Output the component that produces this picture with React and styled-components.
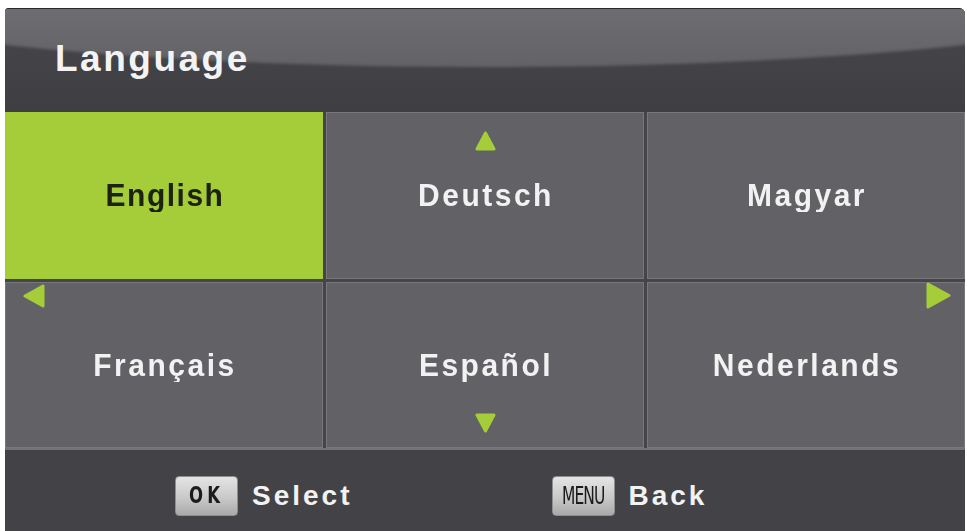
import React from "react";
import styled, { createGlobalStyle } from "styled-components";

const Global = createGlobalStyle`
  html, body { margin: 0; padding: 0; background: #ffffff; }
  body { font-family: "Liberation Sans", Arial, sans-serif; }
`;

const Screen = styled.div`
  width: 967px;
  height: 531px;
  padding: 8px 2px 0 5px;
  box-sizing: border-box;
  overflow: hidden;
`;

const Panel = styled.div`
  width: 960px;
  height: 523px;
  display: flex;
  flex-direction: column;
  background: #414045;
  border-radius: 4px 6px 0 0;
  overflow: hidden;
  box-shadow: inset 1px 0 0 #6d6d72;
`;

const Header = styled.div`
  position: relative;
  height: 104px;
  flex: none;
  display: flex;
  align-items: center;
  padding: 0 0 4px 50px;
  box-sizing: border-box;
  background: linear-gradient(#47464b, #3f3e43);
  overflow: hidden;
  border-top: 1px solid #2a2a2e;

  &::before {
    content: "";
    position: absolute;
    left: -220px;
    top: -106px;
    width: 1400px;
    height: 164px;
    border-radius: 50%;
    background: linear-gradient(#707074 55%, #636367);
    filter: blur(1.5px);
  }
`;

const Title = styled.h1`
  position: relative;
  margin: 0;
  font-family: "Liberation Sans", Arial, sans-serif;
  font-weight: 700;
  font-size: 37px;
  line-height: 1;
  letter-spacing: 2.5px;
  color: #f3f3f3;
`;

const Grid = styled.div`
  flex: none;
  height: 336px;
  display: grid;
  grid-template-columns: 1fr 1fr 1fr;
  grid-template-rows: 1fr 1fr;
  gap: 3px;
  background: #454449;
`;

const Cell = styled.div`
  position: relative;
  display: flex;
  align-items: center;
  justify-content: center;
  box-sizing: border-box;
  background: ${(p) => (p.$active ? "#a5cd3a" : "#616166")};
  border: 1px solid ${(p) => (p.$active ? "#a5cd3a" : "#77777c")};
`;

const Label = styled.span`
  display: inline-block;
  font-family: "Liberation Sans", Arial, sans-serif;
  font-weight: 700;
  font-size: 30px;
  letter-spacing: ${(p) => (p.$active ? "1.5px" : "2.5px")};
  color: ${(p) => (p.$active ? "#1c220f" : "#f2f2f2")};
  padding-left: 2px;
  transform: scaleY(1.06);
`;

const Arrow = styled.svg`
  position: absolute;
  ${(p) => p.$pos}
`;

const Footer = styled.div`
  flex: 1;
  display: flex;
  align-items: center;
  gap: 199px;
  padding: 10px 0 0 170px;
  border-top: 2px solid #727277;
  background: #434347;
`;

const Hint = styled.div`
  display: flex;
  align-items: center;
  gap: 14px;
`;

const Key = styled.div`
  width: 63px;
  height: 40px;
  box-sizing: border-box;
  display: flex;
  align-items: center;
  justify-content: center;
  border-radius: 4px;
  border: 1px solid #8e8e8e;
  background: linear-gradient(#e4e4e4, #c9c9c9 55%, #a9a9a9);
  overflow: hidden;
`;

const KeyText = styled.span`
  display: inline-block;
  font-family: "DejaVu Sans", "Liberation Sans", Arial, sans-serif;
  font-size: ${(p) => p.$size}px;
  font-weight: ${(p) => p.$weight};
  letter-spacing: ${(p) => p.$ls}px;
  color: #1b1b1b;
  transform: scaleX(${(p) => p.$sx});
  line-height: 1;
  white-space: nowrap;
`;

const HintText = styled.span`
  font-family: "Liberation Sans", Arial, sans-serif;
  font-weight: 700;
  font-size: 28px;
  letter-spacing: 3px;
  color: #f2f2f2;
`;

const green = "#a5cd3a";

const Tri = ({ dir, w, h, pos }) => {
  const pts = {
    up: `${w / 2},2 ${w - 2},${h - 2} 2,${h - 2}`,
    down: `2,2 ${w - 2},2 ${w / 2},${h - 2}`,
    left: `2,${h / 2} ${w - 2},2 ${w - 2},${h - 2}`,
    right: `2,2 ${w - 2},${h / 2} 2,${h - 2}`,
  }[dir];
  return (
    <Arrow $pos={pos} width={w} height={h} viewBox={`0 0 ${w} ${h}`}>
      <polygon points={pts} fill={green} stroke={green} strokeWidth="3" strokeLinejoin="round" />
    </Arrow>
  );
};

const languages = ["English", "Deutsch", "Magyar", "Français", "Español", "Nederlands"];

export default function App() {
  return (
    <>
      <Global />
      <Screen>
        <Panel>
          <Header>
            <Title>Language</Title>
          </Header>
          <Grid>
            {languages.map((l, i) => (
              <Cell key={l} $active={i === 0}>
                {i === 1 && <Tri dir="up" w={21} h={20} pos="left: 148px; top: 18px;" />}
                {i === 4 && <Tri dir="down" w={21} h={20} pos="left: 148px; bottom: 14px;" />}
                {i === 3 && <Tri dir="left" w={22} h={24} pos="left: 17px; top: 1px;" />}
                {i === 5 && <Tri dir="right" w={25} h={27} pos="right: 13px; top: -1px;" />}
                <Label $active={i === 0}>{l}</Label>
              </Cell>
            ))}
          </Grid>
          <Footer>
            <Hint>
              <Key>
                <KeyText $size={23} $weight={700} $ls={6} $sx={0.72}>OK</KeyText>
              </Key>
              <HintText>Select</HintText>
            </Hint>
            <Hint>
              <Key>
                <KeyText $size={25} $weight={400} $ls={-1.5} $sx={0.62}>MENU</KeyText>
              </Key>
              <HintText>Back</HintText>
            </Hint>
          </Footer>
        </Panel>
      </Screen>
    </>
  );
}
